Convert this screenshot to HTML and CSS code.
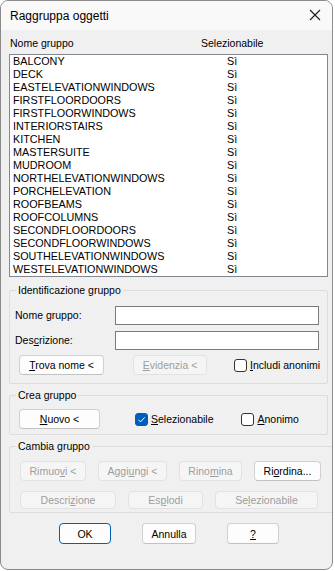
FILE: index.html
```html
<!DOCTYPE html>
<html lang="it">
<head>
    <meta charset="UTF-8">
    <meta name="viewport" content="width=device-width, initial-scale=1.0">
    <title>Raggruppa oggetti</title>
    <link rel="stylesheet" href="styles.css">
</head>
<body>
    <div class="window">
        <div class="titlebar">
            <span class="title">Raggruppa oggetti</span>
            <svg class="close" width="12" height="12" viewBox="0 0 12 12">
                <path d="M1 1 L11 11 M11 1 L1 11" stroke="#1a1a1a" stroke-width="1.1" fill="none"/>
            </svg>
        </div>

        <div class="content">
            <div class="list-header">
                <span class="col-name">Nome <u>g</u>ruppo</span>
                <span class="col-sel">Selezionabile</span>
            </div>

            <div class="listbox" id="groupList"></div>

            <fieldset class="group-box ident">
                <legend>Identificazione gruppo</legend>
                <div class="field-row">
                    <label>Nome <u>g</u>ruppo:</label>
                    <input type="text" class="text-input">
                </div>
                <div class="field-row">
                    <label>Des<u>c</u>rizione:</label>
                    <input type="text" class="text-input">
                </div>
                <div class="button-row">
                    <button class="btn btn-find"><u>T</u>rova nome &lt;</button>
                    <button class="btn btn-highlight" disabled><u>E</u>videnzia &lt;</button>
                    <label class="check check-incl"><span class="box"></span><u>I</u>ncludi anonimi</label>
                </div>
            </fieldset>

            <fieldset class="group-box create">
                <legend>Crea gruppo</legend>
                <div class="button-row">
                    <button class="btn btn-new"><u>N</u>uovo &lt;</button>
                    <label class="check check-sel">
                        <span class="box checked">
                            <svg width="13" height="13" viewBox="0 0 13 13"><path d="M3.5 6.8 L5.6 8.9 L9.6 4.4" stroke="#fff" stroke-width="1" fill="none"/></svg>
                        </span><u>S</u>elezionabile
                    </label>
                    <label class="check check-anon"><span class="box"></span><u>A</u>nonimo</label>
                </div>
            </fieldset>

            <fieldset class="group-box change">
                <legend>Cambia gruppo</legend>
                <div class="button-row row-one">
                    <button class="btn b-remove" disabled>Rimuo<u>v</u>i &lt;</button>
                    <button class="btn b-add" disabled>Aggi<u>u</u>ngi &lt;</button>
                    <button class="btn b-rename" disabled>Rino<u>m</u>ina</button>
                    <button class="btn b-order">Ri<u>o</u>rdina...</button>
                </div>
                <div class="button-row row-two">
                    <button class="btn b-desc" disabled>Descri<u>z</u>ione</button>
                    <button class="btn b-explode" disabled>Es<u>p</u>lodi</button>
                    <button class="btn b-select" disabled>Se<u>l</u>ezionabile</button>
                </div>
            </fieldset>

            <div class="dialog-buttons">
                <button class="btn btn-ok">OK</button>
                <button class="btn btn-cancel">Annulla</button>
                <button class="btn btn-help"><u>?</u></button>
            </div>
        </div>
    </div>

    <script>
        const groups = [
            'BALCONY', 'DECK', 'EASTELEVATIONWINDOWS', 'FIRSTFLOORDOORS',
            'FIRSTFLOORWINDOWS', 'INTERIORSTAIRS', 'KITCHEN', 'MASTERSUITE',
            'MUDROOM', 'NORTHELEVATIONWINDOWS', 'PORCHELEVATION', 'ROOFBEAMS',
            'ROOFCOLUMNS', 'SECONDFLOORDOORS', 'SECONDFLOORWINDOWS',
            'SOUTHELEVATIONWINDOWS', 'WESTELEVATIONWINDOWS'
        ];

        const list = document.getElementById('groupList');
        groups.forEach(name => {
            const row = document.createElement('div');
            row.className = 'list-row';
            row.innerHTML = `<span class="row-name">${name}</span><span class="row-sel">Sì</span>`;
            list.appendChild(row);
        });
    </script>
</body>
</html>
```

FILE: styles.css
```css
html {
    background: #ffffff;
}

body {
    margin: 0;
    font-family: "Liberation Sans", Arial, sans-serif;
    font-size: 10.5px;
    color: #000;
}

.window {
    width: 331px;
    height: 568px;
    border: 1px solid #8a8a8a;
    border-radius: 8px;
    background: #f0f0f0;
    overflow: hidden;
}

.titlebar {
    height: 29px;
    background: #f9f9f9;
    display: flex;
    align-items: center;
    justify-content: space-between;
    padding: 0 10px 0 9px;
}

.title {
    font-size: 12px;
    line-height: 14px;
}

.close {
    margin-top: -1px;
    margin-right: 1px;
}

.content {
    padding: 0 0 0 8px;
}

.list-header {
    height: 23px;
    display: flex;
    align-items: center;
    line-height: 14px;
    padding-top: 1px;
}

.col-name {
    margin-left: 1px;
    width: 191px;
}

.listbox {
    width: 317px;
    height: 221px;
    border: 1px solid #828790;
    background: #fff;
    font-size: 10.8px;
}

.list-row {
    height: 13px;
    line-height: 13px;
    display: flex;
    padding-left: 3px;
}

.row-name {
    width: 214px;
}

fieldset.group-box {
    box-sizing: border-box;
    width: 319px;
    margin: 0;
    border: 1px solid #dcdcdc;
    border-radius: 2px;
    padding: 0;
}

.group-box legend {
    padding: 0 2px;
    margin-left: 6px;
    line-height: 14px;
}

.ident {
    margin-top: 6px !important;
    height: 101px;
}

.field-row {
    display: flex;
    align-items: center;
    height: 18px;
    margin-top: 9px;
}

.field-row + .field-row {
    margin-top: 7px;
}

.field-row label {
    width: 100px;
    padding-left: 5px;
}

.text-input {
    box-sizing: border-box;
    width: 204px;
    height: 19px;
    border: 1px solid #7a7a7a;
    border-radius: 0;
    background: #fff;
    margin: 0;
    padding: 0;
}

.button-row {
    display: flex;
    align-items: center;
    padding-left: 9px;
    white-space: nowrap;
}

.btn {
    box-sizing: border-box;
    font-family: inherit;
    font-size: 10.5px;
    color: #000;
    background: #fdfdfd;
    border: 1px solid #d0d0d0;
    border-bottom-color: #c2c2c2;
    border-radius: 4px;
    height: 20px;
    padding: 0;
    line-height: 16px;
}

.btn:disabled {
    background: #f5f5f5;
    border-color: #e2e2e2;
    color: #9d9d9d;
}

.ident .button-row {
    margin-top: 6px;
}

.btn-find {
    width: 85px;
}

.btn-highlight {
    width: 74px;
    margin-left: 29px;
}

.check {
    display: flex;
    align-items: center;
}

.check-incl {
    margin-left: 27px;
}

.box {
    box-sizing: border-box;
    width: 13px;
    height: 13px;
    border: 1px solid #333;
    border-radius: 3px;
    background: #fff;
    margin-right: 3px;
    display: inline-flex;
}

.box.checked {
    background: #005fb8;
    border-color: #005fb8;
}

.box.checked svg {
    margin: -1px;
}

.create {
    margin-top: 4px !important;
    height: 47px;
}

.create .button-row {
    margin-top: 7px;
}

.btn-new {
    width: 81px;
}

.check-sel {
    margin-left: 35px;
}

.check-anon {
    margin-left: 28px;
}

.change {
    margin-top: 4px !important;
    height: 74px;
}

.change .button-row {
    padding-left: 10px;
}

.row-one {
    margin-top: 8px;
}

.row-two {
    margin-top: 10px;
}

.row-one .btn {
    height: 20px;
    margin-right: 12px;
}

.b-remove { width: 66px; }
.b-add { width: 69px; }
.b-rename { width: 63px; }
.b-order { width: 67px; }

.row-two .btn {
    height: 18px;
    margin-right: 12px;
}

.b-desc { width: 96px; }
.b-explode { width: 75px; }
.b-select { width: 103px; }

.dialog-buttons {
    display: flex;
    margin-top: 10px;
    padding-left: 50px;
}

.dialog-buttons .btn {
    width: 52px;
    height: 21px;
    margin-right: 31px;
}

.btn-cancel {
    width: 54px !important;
}

.btn-ok {
    border: 1px solid #005fb8 !important;
    box-shadow: inset 0 0 0 1px #ffffff;
}
```
